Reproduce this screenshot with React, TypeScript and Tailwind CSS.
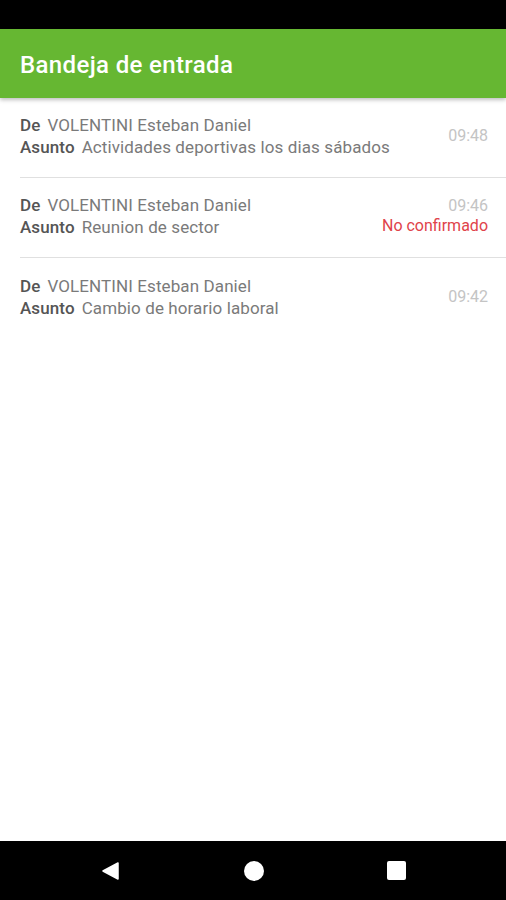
const messages = [
  { from: "VOLENTINI Esteban Daniel", subject: "Actividades deportivas los dias sábados", time: "09:48", pending: false },
  { from: "VOLENTINI Esteban Daniel", subject: "Reunion de sector", time: "09:46", pending: true },
  { from: "VOLENTINI Esteban Daniel", subject: "Cambio de horario laboral", time: "09:42", pending: false },
];

export default function App() {
  return (
    <div className="flex h-[900px] w-[506px] flex-col bg-white font-['Roboto',sans-serif]">
      <div className="h-[29px] bg-black" />
      <header className="relative z-10 flex h-[69px] items-center bg-[#66b732] px-5 pt-[3px] shadow-[0_2px_4px_rgba(0,0,0,0.25)]">
        <h1 className="text-[24px] font-medium tracking-[0.015em] text-white">Bandeja de entrada</h1>
      </header>

      <ul className="flex-1">
        {messages.map((m, i) => (
          <li
            key={m.time}
            className={`ml-5 flex h-[80px] items-center pb-[3px] pr-[18px] ${
              i < messages.length - 1 ? "border-b border-[#e0e0e0]" : ""
            }`}
          >
            <div className="flex-1 text-[17px] leading-[22px] tracking-[0.006em] text-[#7a7a7a]">
              <p>
                <span className="mr-[7px] font-medium text-[#555]">De</span>
                {m.from}
              </p>
              <p>
                <span className="mr-[7px] font-medium text-[#555]">Asunto</span>
                {m.subject}
              </p>
            </div>
            <div className="text-right text-[16px] leading-[20px]">
              <p className="text-[#c4c4c4]">{m.time}</p>
              {m.pending && <p className="text-[#e0434a]">No confirmado</p>}
            </div>
          </li>
        ))}
      </ul>

      <nav className="flex h-[59px] items-center justify-center bg-black">
        <div className="flex w-[306px] items-center justify-between">
          <svg width="20" height="20" viewBox="0 0 20 20">
            <path d="M18 2 L3 10 L18 18 Z" fill="white" strokeLinejoin="round" stroke="white" strokeWidth="1.5" />
          </svg>
          <div className="h-5 w-5 rounded-full bg-white" />
          <div className="h-[19px] w-[19px] rounded-[2px] bg-white" />
        </div>
      </nav>
    </div>
  );
}
